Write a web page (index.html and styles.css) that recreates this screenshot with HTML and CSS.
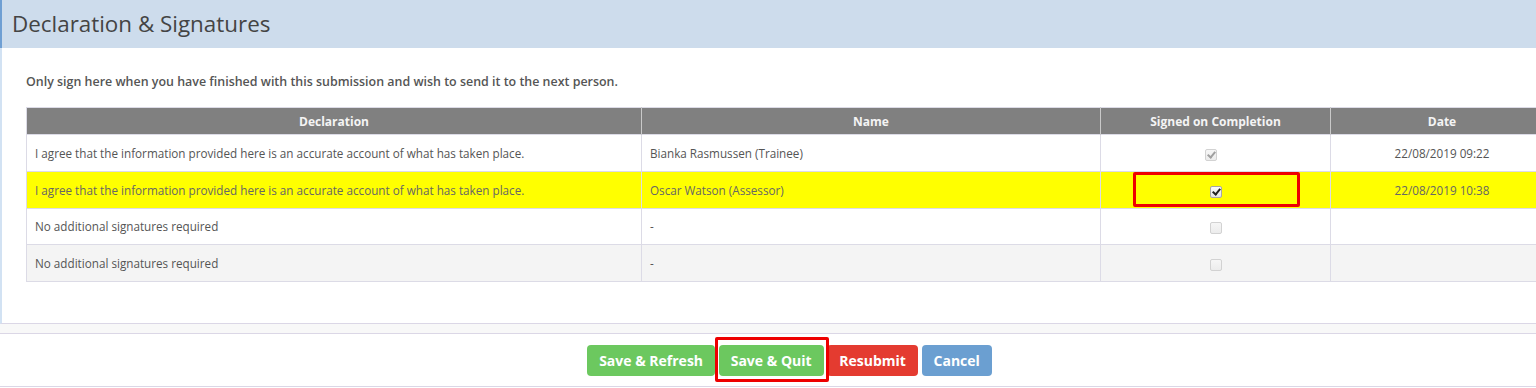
FILE: index.html
```html
<!DOCTYPE html>
<html lang="en">
<head>
    <meta charset="UTF-8">
    <meta name="viewport" content="width=device-width, initial-scale=1.0">
    <title>Declaration &amp; Signatures</title>
    <link rel="stylesheet" href="styles.css">
</head>
<body>
    <div class="page">
        <div class="panel">
            <div class="panel-heading">Declaration &amp; Signatures</div>

            <div class="panel-body">
                <p class="intro">Only sign here when you have finished with this submission and wish to send it to the next person.</p>

                <!-- Signatures table -->
                <table class="signatures">
                    <thead>
                        <tr>
                            <th class="col-decl">Declaration</th>
                            <th class="col-name">Name</th>
                            <th class="col-signed">Signed on Completion</th>
                            <th class="col-date">Date</th>
                        </tr>
                    </thead>
                    <tbody>
                        <tr>
                            <td>I agree that the information provided here is an accurate account of what has taken place.</td>
                            <td>Bianka Rasmussen (Trainee)</td>
                            <td class="center"><span class="check checked disabled first"></span></td>
                            <td class="center">22/08/2019 09:22</td>
                        </tr>
                        <tr class="current">
                            <td>I agree that the information provided here is an accurate account of what has taken place.</td>
                            <td>Oscar Watson (Assessor)</td>
                            <td class="center marked"><span class="check checked"></span><span class="mark-box"></span></td>
                            <td class="center">22/08/2019 10:38</td>
                        </tr>
                        <tr>
                            <td>No additional signatures required</td>
                            <td>-</td>
                            <td class="center"><span class="check disabled"></span></td>
                            <td></td>
                        </tr>
                        <tr class="alt">
                            <td>No additional signatures required</td>
                            <td>-</td>
                            <td class="center"><span class="check disabled"></span></td>
                            <td></td>
                        </tr>
                    </tbody>
                </table>
            </div>
        </div>

        <div class="spacer"></div>

        <!-- Form buttons -->
        <div class="actions">
            <button class="btn btn-green">Save &amp; Refresh</button>
            <span class="marked-btn"><button class="btn btn-green">Save &amp; Quit</button></span>
            <button class="btn btn-red">Resubmit</button>
            <button class="btn btn-blue">Cancel</button>
        </div>
    </div>
</body>
</html>
```

FILE: styles.css
```css
/* Basic Styling */
body {
    font-family: 'Open Sans', 'Liberation Sans', sans-serif;
    margin: 0;
    padding: 0;
    background: #fff;
    overflow: hidden;
    color: #555;
}

.page {
    width: 1579px;
}

/* Panel */
.panel {
    border-left: 2px solid #d2e2f3;
    border-bottom: 1px solid #dbd7e6;
}

.panel-heading {
    margin-left: -2px;
    height: 48px;
    line-height: 47px;
    padding-left: 10px;
    border-left: 2px solid #6f9fd3;
    background-color: #cddcec;
    color: #444;
    font-size: 22.4px;
}

.panel-body {
    padding: 25px 24px 41px;
}

.intro {
    margin: 0 0 17px;
    font-size: 12.45px;
    line-height: 17px;
    font-weight: 600;
    color: #555;
}

/* Table */
.signatures {
    width: 1527px;
    border-collapse: collapse;
    table-layout: fixed;
    font-size: 11.7px;
    border: 1px solid #dcdbe6;
}

.signatures th {
    height: 26px;
    background-color: #808080;
    color: #f4f4f4;
    font-size: 12px;
    font-weight: 700;
    border-left: 1px solid #c9c9c9;
    padding: 0;
}

.signatures th:first-child {
    border-left: none;
}

.col-decl { width: 614px; }
.col-name { width: 458px; }
.col-signed { width: 229px; }
.col-date { width: 222px; }

.signatures td {
    height: 35.75px;
    padding: 0 8px;
    border: 1px solid #dcdbe6;
    color: #555;
    white-space: nowrap;
}

.signatures .center {
    text-align: center;
}

.signatures tr.current td {
    background-color: #ffff00;
    color: #666;
}

.signatures tr.alt td {
    background-color: #f4f4f4;
}

/* Checkboxes */
.check {
    display: inline-block;
    box-sizing: border-box;
    width: 12px;
    height: 12px;
    vertical-align: middle;
    border: 1px solid #a6a6a6;
    border-radius: 2px;
    background: linear-gradient(#fdfdfd, #e2e2e2);
    position: relative;
}

.check.disabled {
    border-color: #d2d2d2;
    background: linear-gradient(#f6f6f6, #ececec);
}

.check.first {
    margin-right: 10px;
}

.check.checked::after {
    content: "";
    position: absolute;
    left: 3px;
    top: 0px;
    width: 3px;
    height: 6px;
    border: solid #222;
    border-width: 0 2px 2px 0;
    transform: rotate(40deg);
}

.check.checked.disabled::after {
    border-color: #a0a0a0;
}

/* Red annotation boxes */
.marked {
    position: relative;
}

.mark-box {
    position: absolute;
    top: 0;
    left: 32px;
    width: 167px;
    height: 35px;
    box-sizing: border-box;
    border: 3px solid #ee0000;
    border-radius: 2px;
}

.marked-btn {
    position: relative;
    display: inline-block;
}

.marked-btn::after {
    content: "";
    position: absolute;
    top: -8px;
    bottom: -6px;
    left: -4px;
    right: -5px;
    border: 3px solid #ee0000;
    border-radius: 2px;
}

/* Footer */
.spacer {
    height: 9px;
    background-color: #f8f8f8;
    border-bottom: 1px solid #dbd7e6;
}

.actions {
    padding: 11px 0 10px;
    text-align: center;
    border-bottom: 1px solid #dbd7e6;
    font-size: 14px;
}

.btn {
    height: 31px;
    padding: 0 12px;
    font-family: 'Open Sans', 'Liberation Sans', sans-serif;
    font-size: 14px;
    font-weight: 700;
    color: white;
    border: none;
    border-radius: 4px;
    vertical-align: top;
    cursor: pointer;
}

.btn-green {
    background-color: #6cc85f;
}

.btn-red {
    background-color: #e43b30;
}

.btn-blue {
    background-color: #6b9fd1;
}
```
